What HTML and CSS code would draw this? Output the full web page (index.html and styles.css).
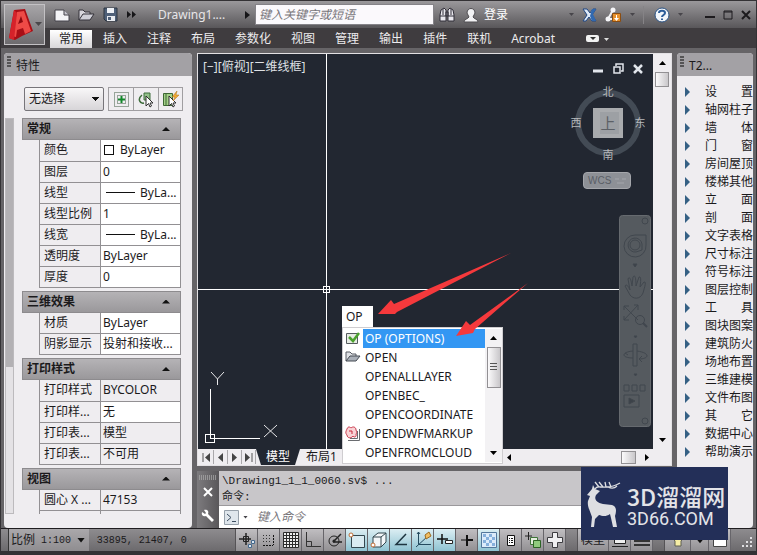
FILE: index.html
```html
<!DOCTYPE html>
<html lang="zh-CN">
<head>
<meta charset="utf-8">
<title>Drawing1</title>
<link rel="stylesheet" href="styles.css">
</head>
<body>
<header class="top">
  <button class="app" aria-label="应用程序菜单">
    <svg width="40" height="40" viewBox="0 0 40 40"><path d="M4 33L9 5L20 4L28 26L17 31L10 35Z" fill="#a80f16"/><path d="M7 31L12 7L19 6L26 26L20 29L18 23L12 25L11 32Z" fill="#ee4a46"/><path d="M13 19L16 11L18 17Z" fill="#8d0a10"/><path d="M4 33L9 5L12 8L9 35Z" fill="#d5222a"/><path d="M30 17h7l-3.500 4z" fill="#4a484b"/></svg>
  </button>
  <div class="title">
    <button class="ic" aria-label="新建"><svg width="16" height="14" viewBox="0 0 16 14"><path d="M1 2H10L15 7V13H1Z" fill="#f4f4f7" stroke="#45434a"/><path d="M10 2V7H15" fill="#c9c8d0" stroke="#45434a"/></svg></button>
    <button class="ic" aria-label="打开"><svg width="17" height="14" viewBox="0 0 17 14"><path d="M1 12V2H5L7 4H12V7" fill="#d8d7dd" stroke="#35333a"/><path d="M1 12L5 6H16L12 12Z" fill="#d0d0d8" stroke="#35333a"/></svg></button>
    <button class="ic" aria-label="保存"><svg width="15" height="15" viewBox="0 0 15 15"><path d="M1 1H14V14H3L1 12Z" fill="#4f6079" stroke="#2c3440"/><path d="M4 1H11V6H4Z" fill="#eef1f6"/><path d="M4 9H12V14H4Z" fill="#e8ebf0"/><path d="M5 10H8V13H5Z" fill="#4f6079"/></svg></button>
    <button class="ic more" aria-label="更多"><svg width="9" height="7" viewBox="0 0 9 7"><path d="M0 0L4 3.500L0 7ZM5 0L9 3.500L5 7Z" fill="#161518"/></svg></button>
    <span class="doc">Drawing1....</span>
    <svg width="5" height="8" viewBox="0 0 5 8"><path d="M0 0L5 4L0 8Z" fill="#161518"/></svg>
    <input class="search" type="text" placeholder="键入关键字或短语" aria-label="搜索">
    <button class="ic" aria-label="查找"><svg width="16" height="16" viewBox="0 0 16 16"><path d="M2 3L5 1L7 3V14H1V8ZM14 3L11 1L9 3V14H15V8Z" fill="#e9e8ee" stroke="#302e38"/><path d="M7 5H9V9H7ZM1 9H7M9 9H15M4 2V8M12 2V8" fill="#77757f" stroke="#302e38"/></svg></button>
    <button class="ic login"><svg width="16" height="16" viewBox="0 0 16 16"><path d="M1 15C1 12 5 12 6 10L4 6C4 0 12 0 12 6L10 10C11 12 15 12 15 15Z" fill="#f2f2f4" stroke="#504e52"/></svg><span>登录</span></button>
    <span class="grow"></span>
    <i class="dn"></i>
    <button class="ic" aria-label="Exchange"><svg width="15" height="14" viewBox="0 0 15 14"><path d="M1 1H5L8 5L11 1H14L10 7L14 13H10L7 9L4 13H1L5 7Z" fill="#dfe9f6" stroke="#204783"/><path d="M10 1H14L11 6L14 13H10L8 8Z" fill="#3169b0"/></svg></button>
    <button class="ic" aria-label="应用"><svg width="17" height="16" viewBox="0 0 17 16"><path d="M8 3L3 12H8" fill="none" stroke="#f2f2f5" stroke-width="2"/><circle cx="8" cy="3" r="2.500" fill="#f5f5f8"/><circle cx="3" cy="12" r="2.500" fill="#f5f5f8"/><path d="M7.500 6.500H15.500V14.500H7.500Z" fill="#e7912d" stroke="#8a4d12"/><path d="M11 8V11H9L11.500 14L14 11H12V8Z" fill="#fff"/></svg></button>
    <i class="dn"></i><i class="sep"></i>
    <button class="ic" aria-label="帮助"><svg width="16" height="16" viewBox="0 0 16 16"><circle cx="8" cy="8" r="7" fill="#f1f5fa" stroke="#2b5283"/><path d="M5 6C5 3 11 3 11 6C11 8 8 8 8 10M8 11.500V13" fill="none" stroke="#2c5d9a" stroke-width="2"/></svg></button>
    <i class="dn"></i>
    <span class="win">
      <button class="ic" aria-label="最小化"><svg width="10" height="10" viewBox="0 0 10 10"><path d="M0 7H10" stroke="#1d1b1e" stroke-width="2"/></svg></button>
      <button class="ic" aria-label="最大化"><svg width="10" height="10" viewBox="0 0 10 10"><path d="M1 1H9V9H1ZM1 2H9" fill="none" stroke="#1d1b1e"/></svg></button>
      <button class="ic" aria-label="关闭"><svg width="10" height="10" viewBox="0 0 10 10"><path d="M1 1L9 9M9 1L1 9" stroke="#1d1b1e" stroke-width="2"/></svg></button>
    </span>
  </div>
  <nav class="ribbon">
    <a class="on" href="#">常用</a><a href="#">插入</a><a href="#">注释</a><a href="#">布局</a><a href="#">参数化</a><a href="#">视图</a><a href="#">管理</a><a href="#">输出</a><a href="#">插件</a><a href="#">联机</a><a href="#">Acrobat</a>
    <button class="ic rb" aria-label="功能区"><svg width="23" height="8" viewBox="0 0 23 8"><rect width="13" height="7" rx="2" fill="#f2f2f2"/><path d="M4 2H10L7 5Z" fill="#333"/><path d="M18 3H23L20.500 6Z" fill="#ddd"/></svg></button>
  </nav>
</header>

<main class="work">
  <aside class="panel left">
    <h2><i class="grip"></i>特性</h2>
    <div class="tools">
      <select aria-label="选择对象"><option>无选择</option></select>
      <button aria-label="切换"><svg width="17" height="17" viewBox="0 0 17 17"><path d="M1.500 1.500H15.500V15.500H1.500ZM4.500 4.500H12.500V12.500H4.500Z" fill="none" stroke="#3e5a42" stroke-dasharray="1 1"/><path d="M8.500 5V12M5 8.500H12" stroke="#12872a" stroke-width="2"/></svg></button><button aria-label="选择对象"><svg width="17" height="17" viewBox="0 0 17 17"><path d="M6 2H12V9H6Z" fill="#93c08a" stroke="#3f6e3d"/><path d="M4 4C-1 8 2 13 6 12" fill="none" stroke="#3f6e3d" stroke-width="1.500"/><path d="M8 5V15L10.500 12.500L12 16L13.500 15L12 12H15Z" fill="#fff" stroke="#2e2e2e"/></svg></button><button aria-label="快速选择"><svg width="17" height="17" viewBox="0 0 17 17"><path d="M1.500 2.500H10.500V14.500H1.500Z" fill="#a4d089" stroke="#3d6733"/><path d="M4 3V14" stroke="#3d6733"/><path d="M7 5V15L9.500 12.500L11 16L12.500 15L11 12H14Z" fill="#fff" stroke="#2e2e2e"/><path d="M15 0L10 6H13L11 10L17 4H14Z" fill="#f0a934" stroke="#b27316" stroke-width=".5"/></svg></button>
    </div>
    <div class="props">
      <div class="vbar"><i></i></div>
      <div class="groups">
        <section><h3>常规<i></i></h3>
        <table>
          <tr><th>颜色</th><td><i class="sw"></i>ByLayer</td></tr>
          <tr><th>图层</th><td>0</td></tr>
          <tr><th>线型</th><td><i class="ln"></i>ByLa...</td></tr>
          <tr><th>线型比例</th><td>1</td></tr>
          <tr><th>线宽</th><td><i class="ln"></i>ByLa...</td></tr>
          <tr><th>透明度</th><td>ByLayer</td></tr>
          <tr><th>厚度</th><td>0</td></tr>
        </table></section>
        <section><h3>三维效果<i></i></h3>
        <table>
          <tr><th>材质</th><td>ByLayer</td></tr>
          <tr><th>阴影显示</th><td>投射和接收...</td></tr>
        </table></section>
        <section><h3>打印样式<i></i></h3>
        <table>
          <tr><th>打印样式</th><td class="ro">BYCOLOR</td></tr>
          <tr><th>打印样...</th><td>无</td></tr>
          <tr><th>打印表...</th><td class="ro">模型</td></tr>
          <tr><th>打印表...</th><td class="ro">不可用</td></tr>
        </table></section>
        <section><h3>视图<i></i></h3>
        <table>
          <tr><th>圆心 X ...</th><td class="ro">47153</td></tr>
          <tr><th>圆心 Y ...</th><td class="ro"></td></tr>
        </table></section>
      </div>
    </div>
  </aside>

  <div class="center">
    <div class="sheet">
      <div class="canvas">
        <svg class="lines" width="100%" height="100%">
          <g stroke="#fff" fill="none" shape-rendering="crispEdges">
            <path d="M128.500 0V1000M0 235.500H2000M125.500 232.500H131.500V238.500H125.500Z"/>
            <path d="M12.500 335V384.500H62M7.500 380.500H16.500V388.500H7.500Z"/>
          </g>
          <path d="M13 318L19.500 325L26 318M19.500 325V331M66 371L79 383M79 371L66 383" stroke="#e8e8ea" fill="none"/>
        </svg>
        <div class="vp">[−][俯视][二维线框]</div>
        <div class="mdi">
          <button class="ic" aria-label="最小化"><svg width="11" height="11" viewBox="0 0 11 11"><path d="M0 8H10" stroke="#e2e6ec" stroke-width="3"/></svg></button>
          <button class="ic" aria-label="还原"><svg width="11" height="11" viewBox="0 0 11 11"><path d="M1 4H7V10H1ZM3 3V1H10V8H8" fill="none" stroke="#e2e6ec" stroke-width="1.500"/></svg></button>
          <button class="ic" aria-label="关闭"><svg width="11" height="11" viewBox="0 0 11 11"><path d="M1 2L9 10M9 2L1 10" stroke="#e2e6ec" stroke-width="2.500"/></svg></button>
        </div>
        <div class="cube">
          <svg width="76" height="76" viewBox="0 0 76 76"><circle cx="38" cy="38" r="30" fill="none" stroke="#434b55" stroke-width="6"/><path d="M23 23H53V53H23Z" fill="#a9abae"/><path d="M30 27H49V49H30Z" fill="#9da0a4"/></svg>
          <span class="n">北</span><span class="w">西</span><span class="u">上</span><span class="e">东</span><span class="s">南</span>
        </div>
        <button class="wcs">WCS<svg width="12" height="6" viewBox="0 0 12 6"><path d="M0 1H4M7 1H11M2 5H9" stroke="#a4a6ac"/></svg></button>
        <svg class="nav" width="32" height="212" viewBox="0 0 32 212"><rect x=".5" y=".5" width="31" height="211" rx="3" fill="#555a5f" stroke="#666a6f"/><g fill="none" stroke="#41474e"><circle cx="26" cy="6" r="3"/><circle cx="16" cy="30" r="5"/><path d="M27 20V30A11 11 0 1 1 16 20ZM23 29A7 7 0 1 0 17 37L23 35Z"/><path d="M14 49H18L16 52Z" fill="#3c4249"/><path d="M6 71C8 68 10 73 11 75L9 64C10 61 12 63 13 71L14 62C16 59 17 63 17 71L20 62C22 61 22 65 21 72L25 67C28 66 25 74 24 78C21 85 14 84 11 80Z"/><path d="M5 91L19 105M19 90L5 105M5 95V91H10M15 90H19V95M5 101V105H10"/><circle cx="21" cy="105" r="4.500"/><path d="M24 108L28 112" stroke-width="2"/><path d="M15 121H18L16.500 123Z" fill="#3c4249"/><path d="M14 129H18V151H14ZM14 136C2 137 2 143 14 143M18 136C32 138 30 144 20 144L23 141M20 144L23 147M9 140L6 138"/><path d="M15 159H18L16.500 161Z" fill="#3c4249"/><path d="M5 170H10V176H5ZM13 170H18V176H13ZM21 170H26V176H21ZM5 180H20V192H5Z"/><path d="M10 183L16 186L10 189Z" fill="#3c4249"/><circle cx="26" cy="206" r="3"/></g></svg>
      </div>
      <div class="vs"><svg width="7" height="4" viewBox="0 0 7 4"><path d="M0 4L3.500 0L7 4Z"/></svg><i class="thumb"></i><span class="grow"></span><svg width="7" height="4" viewBox="0 0 7 4"><path d="M0 0H7L3.500 4Z"/></svg></div>
      <div class="tabs">
        <div class="pg">
          <button aria-label="第一个"><svg width="9" height="9" viewBox="0 0 9 9"><path d="M1 0V9" stroke="#555"/><path d="M8 0L3 4.500L8 9Z"/></svg></button><button aria-label="上一个"><svg width="9" height="9" viewBox="0 0 9 9"><path d="M7 0L2 4.500L7 9Z"/></svg></button><button aria-label="下一个"><svg width="9" height="9" viewBox="0 0 9 9"><path d="M2 0L7 4.500L2 9Z"/></svg></button><button aria-label="最后一个"><svg width="9" height="9" viewBox="0 0 9 9"><path d="M1 0L6 4.500L1 9Z"/><path d="M8 0V9" stroke="#555"/></svg></button>
        </div>
        <a class="tab on" href="#">模型</a><a class="tab" href="#">布局1</a>
        <span class="grow"></span>
        <div class="hs"><svg width="4" height="7" viewBox="0 0 4 7"><path d="M4 0V7L0 3.500Z"/></svg><span class="grow"></span><i class="thumb"></i><svg width="4" height="7" viewBox="0 0 4 7"><path d="M0 0V7L4 3.500Z"/></svg></div>
      </div>
      <div class="complete">
        <input type="text" value="OP" aria-label="命令">
        <div class="pop">
          <ul>
            <li class="on"><svg width="16" height="14" viewBox="0 0 16 14"><path d="M1.500 2.500H12.500V12.500H1.500Z" fill="#e6ebe4" stroke="#555b5e"/><path d="M4 6L8 10L14 2" fill="none" stroke="#4ba12d" stroke-width="2.500"/></svg>OP (OPTIONS)</li>
            <li><svg width="16" height="14" viewBox="0 0 16 14"><path d="M1 11V2H5L7 4H11V6" fill="#dfe1e5" stroke="#565b63"/><path d="M1 11L5 6H15L11 11Z" fill="#a9afb8" stroke="#454a52"/></svg>OPEN</li>
            <li>OPENALLLAYER</li>
            <li>OPENBEC_</li>
            <li>OPENCOORDINATE</li>
            <li><svg width="16" height="16" viewBox="0 0 16 16"><path d="M3 14.500H14.500V3M5 12.500H12.500V5" fill="none" stroke="#6a6c70"/><path d="M2 3C3 0 5 1 6 2C8 0 11 1 11 4C12 6 12 7 11 8C12 11 9 12 8 10C6 13 2 12 2 9C0 7 1 5 2 3Z" fill="#f9d3d6" stroke="#c8374a"/><path d="M4 5H7V8" fill="none" stroke="#c8273a"/></svg>OPENDWFMARKUP</li>
            <li>OPENFROMCLOUD</li>
          </ul>
          <div class="ps"><svg width="7" height="4" viewBox="0 0 7 4"><path d="M0 4L3.500 0L7 4Z"/></svg><i class="thumb"></i><span class="grow"></span><svg width="7" height="4" viewBox="0 0 7 4"><path d="M0 0H7L3.500 4Z"/></svg></div>
        </div>
      </div>
      <svg class="arrows" width="340" height="300" viewBox="0 0 340 300"><path d="M180 260L193 246L196 250L313 199L199 258L197 260Z" fill="#f5393c"/><path d="M258 282L268 267L272 271L330 229L277 275L275 279Z" fill="#f5393c"/></svg>
    </div>
    <div class="cmd">
      <div class="gut"><i class="grip h"></i>
        <button class="ic" aria-label="关闭"><svg width="10" height="10" viewBox="0 0 10 10"><path d="M1 1L9 9M9 1L1 9" stroke="#fff" stroke-width="2"/></svg></button>
        <button class="ic" aria-label="自定义"><svg width="14" height="14" viewBox="0 0 14 14"><path d="M1 3L4 5L5 4L3 1C7 0 8 3 7 5L13 11L11 13L5 7C2 8 0 6 1 3Z" fill="#fff"/></svg></button>
      </div>
      <div class="log"><p>\Drawing1_1_1_0060.sv$ ...<br>命令:</p>
        <label class="entry"><svg width="15" height="15" viewBox="0 0 15 15"><path d="M.5 .5H14.500V14.500H.5Z" fill="#dfe6ec" stroke="#96a0aa"/><path d="M3 4L7 7.500L3 11M8 11.500H12" fill="none" stroke="#3c4e61"/></svg><i class="dn"></i><input type="text" placeholder="键入命令" aria-label="键入命令"></label>
      </div>
    </div>
  </div>

  <aside class="panel right">
    <h2><i class="grip"></i>T2...</h2>
    <ul class="menu">
      <li>设　　置</li><li>轴网柱子</li><li>墙　　体</li><li>门　　窗</li><li>房间屋顶</li><li>楼梯其他</li><li>立　　面</li><li>剖　　面</li><li>文字表格</li><li>尺寸标注</li><li>符号标注</li><li>图层控制</li><li>工　　具</li><li>图块图案</li><li>建筑防火</li><li>场地布置</li><li>三维建模</li><li>文件布图</li><li>其　　它</li><li>数据中心</li><li>帮助演示</li>
    </ul>
  </aside>
</main>

<footer class="status">
  <button class="scale">比例 <span class="mono">1:100</span><i></i></button>
  <span class="mono xy">33895, 21407, 0</span>
  <div class="toggles">
    <button aria-label="推断约束"><svg viewBox="0 0 18 18"><path d="M1 8H13M8 2V14" stroke="#222" stroke-width="1.500"/><path d="M5.500 5.500H10.500V10.500H5.500Z" fill="none" stroke="#222"/><path d="M10.500 13.500H13.500V16.500H10.500ZM13.500 9.500H16.500V12.500H13.500Z" fill="#dce9f4" stroke="#44688c"/></svg></button>
    <button aria-label="捕捉"><svg viewBox="0 0 18 18"><path d="M3 4.500H12M3 7.500H12M3 10.500H12" stroke="#333" stroke-dasharray="1 2"/><path d="M13.500 4V14" stroke="#111" stroke-dasharray="2 1"/><path d="M3 14.500H13" stroke="#111" stroke-dasharray="2 1"/></svg></button>
    <button aria-label="栅格"><svg viewBox="0 0 18 18"><path d="M1.500 1.500H16.500V16.500H1.500ZM4.500 1V17M7.500 1V17M10.500 1V17M13.500 1V17M1 4.500H17M1 7.500H17M1 10.500H17M1 13.500H17" fill="#eee" stroke="#2b2b2b"/></svg></button>
    <button aria-label="正交"><svg viewBox="0 0 18 18"><path d="M2.500 1V15.500H17M2.500 10.500H7.500V15" fill="none" stroke="#333"/></svg></button>
    <button aria-label="极轴"><svg viewBox="0 0 18 18"><circle cx="8" cy="10" r="5" fill="none" stroke="#222"/><path d="M7 11L15 3M7 11H16" stroke="#222" stroke-width="1.500"/><circle cx="8" cy="10" r="1.500" fill="#222"/></svg></button>
    <button class="on" aria-label="对象捕捉"><svg viewBox="0 0 18 18"><path d="M3.500 4.500H16.500V16.500H3.500Z" fill="#d9ecf2" stroke="#33474f"/><circle cx="3" cy="4" r="2" fill="#fff" stroke="#c06b33"/></svg></button>
    <button class="on" aria-label="三维对象捕捉"><svg viewBox="0 0 18 18"><path d="M3 6L8 2H16V11L11 16H3Z" fill="#f4f7f9" stroke="#33474f"/><path d="M3 6H11V16M11 6L16 2" fill="none" stroke="#33474f"/><circle cx="3" cy="14" r="2" fill="#fff" stroke="#c06b33"/></svg></button>
    <button class="on" aria-label="对象追踪"><svg viewBox="0 0 18 18"><path d="M14 3L4 13.500H15" fill="none" stroke="#1e3540" stroke-width="1.500"/></svg></button>
    <button class="on" aria-label="动态UCS"><svg viewBox="0 0 18 18"><path d="M4.500 1V13.500H17M2 16L14 5M3 3L4.500 1L6 3" fill="none" stroke="#234a5e"/><path d="M11 4L15 1L17 5L12 8Z" fill="#f1be62" stroke="#9d6a20"/></svg></button>
    <button class="on" aria-label="动态输入"><svg viewBox="0 0 18 18"><path d="M1 8H12M6 3V13" stroke="#111" stroke-width="1.500"/><path d="M9.500 9.500H16.500V12.500H9.500Z" fill="#fff" stroke="#222"/></svg></button>
    <button aria-label="线宽"><svg viewBox="0 0 18 18"><path d="M3 9H10" stroke="#111"/><path d="M9 9H15M9 4V15" stroke="#111" stroke-width="2"/></svg></button>
    <button class="on" aria-label="透明度"><svg viewBox="0 0 18 18"><path d="M1.500 1.500H16.500V16.500H1.500Z" fill="#dcebfa" stroke="#53789c"/><path d="M3 4.500H15M3 10.500H15" stroke="#86b0dc" stroke-width="3" stroke-dasharray="3 3"/><path d="M6 7.500H15M6 13.500H15" stroke="#86b0dc" stroke-width="3" stroke-dasharray="3 3"/></svg></button>
    <button aria-label="快捷特性"><svg viewBox="0 0 18 18"><path d="M5.500 4.500H12.500V14.500H5.500Z" fill="#fff" stroke="#111"/><path d="M7 7.500H8M9 7.500H11M7 9.500H8M9 9.500H11M7 11.500H8M9 11.500H11" stroke="#111"/></svg></button>
    <button aria-label="选择循环"><svg viewBox="0 0 18 18"><path d="M1 5H8M4.500 1V9" stroke="#222"/><path d="M6.500 6.500H13.500V13.500H6.500Z" fill="#e5eee0" stroke="#3e7438"/><path d="M9.500 9.500H16.500V16.500H9.500Z" fill="#8fcb7d" stroke="#2c6425"/></svg></button>
    <button aria-label="注释监视器"><svg viewBox="0 0 18 18"><path d="M6.500 1.500H11.500V6.500H16.500V11.500H11.500V16.500H6.500V11.500H1.500V6.500H6.500Z" fill="#f0f0f2" stroke="#3c3c40"/></svg></button>
  </div>
  <div class="space">
    <button class="mod">模型</button>
    <button aria-label="布局"><svg viewBox="0 0 18 18"><path d="M3.500 2.500H14.500V12.500H3.500ZM1 15.500H17" fill="#eee" stroke="#222"/><path d="M5 5H9V8M11 5H13" fill="none" stroke="#222"/></svg></button>
    <button aria-label="快速查看"><svg viewBox="0 0 18 18"><path d="M1 6H17M1 10H17M1 14H17" stroke="#333" stroke-width="2"/></svg></button>
  </div>
  <span class="grow"></span>
  <div class="space">
    <button class="wide" aria-label="注释可见性"><svg viewBox="0 0 18 18"><path d="M6 10C2 6 4 1 9 1C14 1 16 6 12 10V15H6Z" fill="#f7eea5" stroke="#5c5c50"/></svg></button>
    <button class="slim" aria-label="状态栏菜单"><svg viewBox="0 0 18 18"><path d="M4 8H14L9 14Z" fill="#111"/></svg></button>
    <button aria-label="全屏显示"><svg viewBox="0 0 18 18"><path d="M2.500 3.500H15.500V15.500H2.500Z" fill="#fff" stroke="#444"/></svg></button>
  </div>
  <svg class="size" width="12" height="12" viewBox="0 0 12 12"><path d="M9 1H11V3H9ZM5 5H7V7H5ZM9 5H11V7H9ZM1 9H3V11H1ZM5 9H7V11H5ZM9 9H11V11H9Z" fill="#e0dfe2"/></svg>
</footer>

<div class="mark">
  <svg width="38" height="48" viewBox="0 0 38 48"><path d="M1 15L6 9L7 5L9 9L14 11L10 15C8 19 10 23 17 24L26 25C30 26 31 30 29 36L31 47H27L25 38L24 34C20 37 16 36 13 35L9 39L8 47H5L6 37C4 31 1 26 2 21L4 16Z" fill="#dedfe2"/><path d="M9 9C11 5 14 8 20 7C26 7 29 6 34 3M13 7L9 2M17 7L13 2M20 7L19 2M25 7L23 2M22 7C26 9 29 8 31 6" fill="none" stroke="#dedfe2" stroke-width="1.300"/></svg>
  <div><b>3D溜溜网</b><span>3D66.COM</span></div>
</div>
</body>
</html>
```
FILE: styles.css
```css
* { box-sizing: border-box; }
body {
  margin: 0;
  height: 100vh;
  display: flex;
  flex-direction: column;
  overflow: hidden;
  background: #666467;
  border: solid #343235;
  border-width: 1px 1px 4px;
  font: 12px/16px "Noto Sans", "Noto Sans CJK SC", sans-serif;
  color: #1b1a1c;
  position: relative;
}
button, input, select { font: inherit; color: inherit; margin: 0; padding: 0; border: 0; }
button { background: none; }
a { color: inherit; text-decoration: none; }
h2, h3, p, ul { margin: 0; padding: 0; }
ul { list-style: none; }
svg { display: block; flex: none; }
.grow { flex: 1; }
.ic { display: flex; align-items: center; flex: none; }
.dn { width: 5px; height: 3px; background: #47454a; clip-path: polygon(0 0, 100% 0, 50% 100%); flex: none; }

/* title bar and ribbon */
.top {
  display: grid;
  grid-template-columns: 48px 1fr;
  grid-template-rows: 27px 20px;
  background: linear-gradient(#9a989b, #59575a 27px, #3f3c3f 27px);
  margin-bottom: 5px;
}
.app {
  grid-row: 1 / 3;
  margin: 3px 4px 3px 3px;
  border: 1px solid #c3c1c4;
  background: linear-gradient(#a7a5a8, #6d6b6e);
  overflow: hidden;
}
.title { display: flex; align-items: center; gap: 8px; padding: 0 5px; }
.more { margin: 0 14px 0 1px; }
.doc { color: #e7e6e8; width: 79px; }
.search { flex: 0 1 179px; min-width: 60px; height: 21px; margin: 0 -3px; padding: 0 3px; background: #fbf9fc; border: 1px solid #858388; }
.search::placeholder, .entry input::placeholder { color: #77757a; font-style: italic; opacity: 1; }
.login { color: #fff; gap: 5px; }
.sep { width: 1px; height: 18px; background: #858386; }
.sep + .ic { margin-left: 2px; }
.win { display: flex; gap: 8px; margin-left: 14px; }
.ribbon { display: flex; gap: 20px; padding-left: 11px; color: #ecebed; align-items: flex-end; }
.ribbon a { height: 18px; line-height: 18px; }
.ribbon .on { background: linear-gradient(#fff, #d9d7da); color: #242225; padding: 0 9px; margin: 0 -9px 0 -10px; }
.rb { height: 18px; margin-left: 11px; }

/* workspace */
.work { flex: 1; min-height: 0; display: grid; grid-template-columns: 188px 1fr 76px; gap: 5px; padding: 0 3px; }
.panel { display: flex; flex-direction: column; min-height: 0; background: #efedf0; border-radius: 4px; overflow: hidden; }
.panel h2 { display: flex; align-items: center; gap: 5px; height: 23px; padding: 2px 0 0 3px; font-size: 12px; font-weight: 400; background: #a3a1a5; flex: none; }
.grip { width: 4px; height: 12px; background: radial-gradient(circle at 1px 1px, #333 1px, transparent 1px) 0 0 / 2px 3px; opacity: .7; align-self: flex-start; margin-top: 1px; }
.tools { display: flex; margin: 11px 9px 7px 20px; height: 24px; flex: none; }
.tools select {
  flex: 1; min-width: 0; margin-right: 4px; padding-left: 4px; border: 1px solid #77757a; border-radius: 2px; appearance: none;
  background: conic-gradient(from 315deg at 50% 4px, #111 90deg, transparent 0) right 4px center / 7px 4px no-repeat, linear-gradient(#f8f7f8, #d7d5d8);
}
.tools button { width: 25px; border: 1px solid #a09ea1; border-right: 0; display: grid; place-items: center; }
.tools button:last-child { border-right: 1px solid #a09ea1; }
.props { flex: 1; min-height: 0; display: flex; gap: 8px; padding: 0 11px 0 1px; margin-bottom: 14px; }
.vbar { width: 9px; background: #e4e2e5; border: 1px solid #bcbabd; }
.vbar i { display: block; height: 63%; background: #b3b1b4; }
.groups { flex: 1; overflow: hidden; }
.groups h3 { display: flex; align-items: center; justify-content: space-between; height: 22px; padding: 0 10px 0 4px; font-size: 12px; background: linear-gradient(#b5b3b6, #9a989b); border: 1px solid #8d8b8e; }
.groups h3 i { width: 8px; height: 4px; background: #111; clip-path: polygon(50% 0, 100% 100%, 0 100%); }
section { padding-bottom: 3px; }
table { border-collapse: collapse; margin-left: 17px; width: calc(100% - 17px); table-layout: fixed; }
th, td { height: 21px; padding: 0 0 0 4px; line-height: 16px; border: 1px solid #929093; text-align: left; font-weight: 400; white-space: nowrap; overflow: hidden; background: #fff; }
tr:first-child > * { border-top: 0; }
td { padding-left: 2px; }
th { width: 61px; }
th, .ro { background: #efedf0; }
.sw { display: inline-block; width: 10px; height: 10px; border: 1px solid #111; margin: 0 6px 0 1px; vertical-align: -1px; }
.ln { display: inline-block; width: 29px; height: 1px; background: #111; margin: 0 5px 0 3px; vertical-align: 4px; }

/* drawing window */
.center { display: flex; flex-direction: column; min-width: 0; min-height: 0; gap: 5px; }
.sheet { position: relative; flex: 1; min-height: 0; display: grid; grid-template-columns: 1fr 18px; grid-template-rows: 1fr 16px; background: #efedf0; border: 1px solid #e3e1e4; }
.canvas { position: relative; overflow: hidden; background: #222731; }
.lines { position: absolute; inset: 0; }
.arrows { position: absolute; left: 0; top: 0; pointer-events: none; }
.vp { position: absolute; left: 5px; top: 5px; color: #dfe1e5; }
.mdi { position: absolute; right: 9px; top: 9px; display: flex; gap: 9px; }
.cube { position: absolute; right: 7px; top: 31px; width: 76px; height: 76px; color: #b6b8bb; font-size: 11px; line-height: 12px; }
.cube span { position: absolute; left: 32px; top: 32px; width: 12px; text-align: center; }
.cube .n { top: 1px; }
.cube .s { top: 64px; }
.cube .w { left: 0; }
.cube .e { left: 64px; }
.cube .u { font-size: 15px; left: 30px; width: 16px; color: #5c6066; }
.wcs { position: absolute; right: 22px; top: 118px; width: 48px; height: 17px; display: flex; align-items: center; gap: 4px; padding-left: 4px; background: #8d9096; border: 1px solid #a4a6ab; border-radius: 4px; color: #5a5e66; font: 10px "Liberation Sans", sans-serif; }
.nav { position: absolute; right: 2px; top: 161px; }
.vs { display: flex; flex-direction: column; align-items: center; padding: 7px 0; }
.thumb { border: 1px solid #929093; background: linear-gradient(90deg, #fbfafb, #c9c7ca); }
.vs .thumb { width: 14px; height: 15px; margin-top: 7px; }
.tabs { grid-column: 1 / 3; display: flex; overflow: hidden; font-size: 12px; line-height: 16px; }
.pg { display: flex; margin: 1px 0 1px 2px; }
.pg button { width: 14px; border-right: 1px solid #aaa8ab; display: grid; place-items: center; }
.pg svg { fill: #444; }
.tab { padding: 0 6px; background: #efedf0; clip-path: polygon(0 0, 100% 0, calc(100% - 5px) 100%, 5px 100%); }
.tab.on { background: #222731; color: #fff; padding: 0 10px; }
.hs { flex: 0 0 164px; display: flex; align-items: center; padding-right: 22px; }
.hs .thumb { width: 15px; height: 13px; margin-right: 9px; }
.complete { position: absolute; left: 144px; top: 252px; width: 161px; }
.complete > input { display: block; width: 31px; height: 21px; background: #fff; padding-left: 4px; }
.pop { display: flex; background: #fff; border: 1px solid #cfcdd0; padding: 1px 0; }
.pop ul { flex: 1; }
.pop li { position: relative; height: 19px; line-height: 19px; margin-left: 20px; padding-left: 2px; white-space: nowrap; }
.pop li svg { position: absolute; left: -18px; top: 2px; }
.pop .on { background: #3397f3; color: #fff; }
.ps { width: 17px; display: flex; flex-direction: column; align-items: center; background: #f3f2f4; padding: 7px 0; }
.ps .thumb { width: 14px; height: 41px; margin-top: 7px; background: linear-gradient(#555, #555) center 15px / 7px 1px no-repeat, linear-gradient(#555, #555) center 18px / 7px 1px no-repeat, linear-gradient(#555, #555) center 21px / 7px 1px no-repeat, linear-gradient(90deg, #fbfafb, #c9c7ca); }

/* command line */
.cmd { display: flex; height: 57px; flex: none; }
.gut { width: 22px; display: flex; flex-direction: column; align-items: center; gap: 12px; background: linear-gradient(90deg, #7d7b7e, #59575a); }
.grip.h { width: 18px; height: 5px; align-self: center; margin: 4px 0 -5px; background: repeating-linear-gradient(90deg, #aaa 0 1px, transparent 1px 2px); }
.log { flex: 1; display: flex; flex-direction: column; min-width: 0; }
.log p { height: 35px; padding: 2px 3px; font: 11px/16px "Liberation Mono", "Noto Sans CJK SC", monospace; background: #c8c6c9; border-bottom: 1px solid #9b999c; }
.entry { flex: 1; display: flex; align-items: center; gap: 4px; padding-left: 5px; background: #fff; }
.entry input { flex: 1; min-width: 0; background: none; padding-left: 5px; }

/* tool menu */
.menu { padding-top: 7px; overflow: hidden; }
.menu li { display: flex; align-items: center; gap: 15px; height: 18px; padding-left: 8px; white-space: nowrap; }
.menu li::before { content: ""; width: 5px; height: 10px; background: #356084; clip-path: polygon(0 0, 100% 50%, 0 100%); flex: none; }

/* status bar */
.status { height: 23px; flex: none; display: flex; align-items: stretch; background: linear-gradient(#8e8c8f, #6c6a6d); border-top: 1px solid #1f1d20; padding: 0 3px 0 7px; }
.mono { font: 10px "Liberation Mono", monospace; }
.scale { width: 81px; display: flex; align-items: center; gap: 6px; background: linear-gradient(#aaa8ab, #8f8d90); border-left: 1px solid #333; padding-left: 2px; white-space: nowrap; }
.scale i { width: 8px; height: 5px; background: #111; clip-path: polygon(0 0, 100% 0, 50% 100%); }
.xy { width: 147px; padding-left: 8px; align-self: center; }
.toggles, .space { display: flex; border-left: 1px solid #555356; }
.status .toggles button, .space button { width: 22px; display: grid; place-items: center; background: linear-gradient(#c0bec1, #929093); border-right: 1px solid #67656a; }
.status .toggles .on { background: linear-gradient(#dceef3, #8fc3d2); }
.status button svg { width: 18px; height: 18px; }
.space { margin-left: 11px; }
.space .mod { width: 31px; }
.space .wide { width: 26px; }
.space .slim { width: 18px; }
.status .slim svg { width: 12px; }
.size { align-self: flex-end; margin: 0 0 3px 10px; }

/* watermark lying over the window */
.mark { position: absolute; right: 28px; bottom: 11px; width: 147px; height: 73px; display: flex; align-items: center; gap: 3px; padding-left: 5px; background: #232f58; color: #e3e4e8; white-space: nowrap; }
.mark div { display: flex; flex-direction: column; margin-top: 2px; }
.mark b { font: 500 23px/28px "Noto Sans CJK SC", sans-serif; }
.mark span { font: 18px/18px "Roboto", sans-serif; }
```
